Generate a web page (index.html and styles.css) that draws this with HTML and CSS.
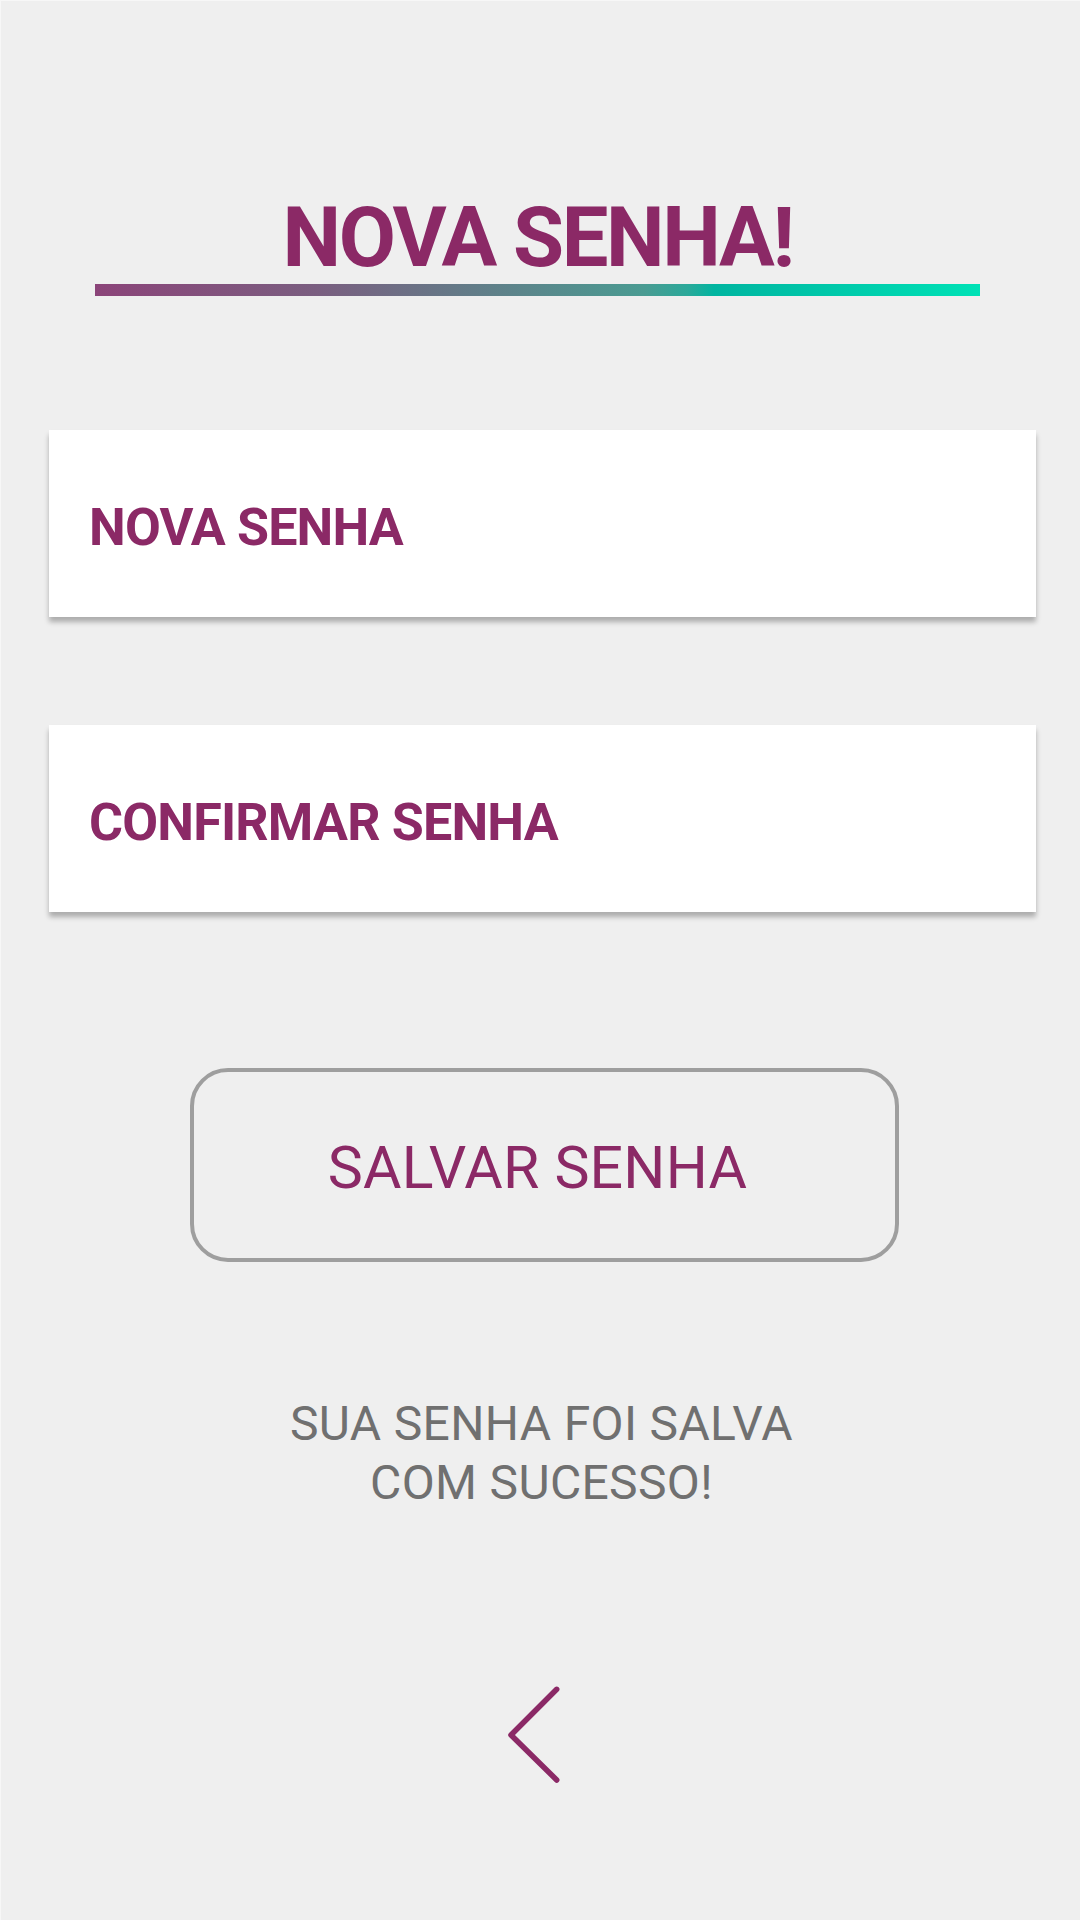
FILE: index.html
```html
<!DOCTYPE html>
<html lang="pt">
<head>
<meta charset="utf-8">
<title>Nova Senha</title>
<link rel="stylesheet" href="styles.css">
</head>
<body>
<main class="screen">
  <header class="header">
    <h1 class="title">NOVA SENHA!</h1>
    <div class="title-bar"></div>
  </header>

  <div class="field field-first"><span class="field-label">NOVA SENHA</span></div>
  <div class="field field-second"><span class="field-label">CONFIRMAR SENHA</span></div>

  <button class="save-btn" type="button">SALVAR SENHA</button>

  <p class="message">SUA SENHA FOI SALVA<br>COM SUCESSO!</p>

  <div class="back">
    <svg class="back-icon" width="70" height="101" viewBox="0 0 70 101" aria-label="Voltar">
      <path d="M50.7 5.3 L5 51 L50.7 96" fill="none" stroke="#8b2966" stroke-width="5.5" stroke-linecap="round" stroke-linejoin="round"/>
    </svg>
  </div>
</main>
</body>
</html>
```

FILE: styles.css
```css
* {
  box-sizing: border-box;
}

html, body {
  margin: 0;
  padding: 0;
  background: #efefef;
}

body {
  font-family: Roboto, "Liberation Sans", Arial, sans-serif;
  width: 1080px;
  height: 1920px;
  overflow: hidden;
}

.screen {
  width: 1080px;
  height: 1920px;
  border-top: 1px solid #f7f7f7;
  border-left: 1px solid #f7f7f7;
  display: flex;
  flex-direction: column;
  align-items: stretch;
}

.header {
  padding-top: 195px;
  display: flex;
  flex-direction: column;
  align-items: center;
}

.title {
  margin: 0;
  font-size: 83px;
  line-height: 83px;
  font-weight: 700;
  color: #8b2966;
  letter-spacing: -2.4px;
  padding-right: 6px;
}

.title-bar {
  margin-top: 5px;
  width: 885px;
  height: 12px;
  margin-left: 94px;
  align-self: flex-start;
  background: linear-gradient(to right, #8b4479 0%, #7a5e80 25%, #5f8089 45%, #4a9b92 62%, #2aa99a 67%, #00b5a0 70%, #00cbab 85%, #00e2b6 100%);
}

.field {
  margin-left: 48px;
  width: 987px;
  height: 187px;
  background: #ffffff;
  box-shadow: 0 5px 5px rgba(0, 0, 0, 0.28);
  display: flex;
  align-items: center;
  padding-left: 40px;
}

.field-first {
  margin-top: 134px;
}

.field-second {
  margin-top: 108px;
}

.field-label {
  font-size: 52px;
  font-weight: 700;
  color: #8b2966;
  padding-top: 8px;
  letter-spacing: -0.8px;
}

.save-btn {
  margin-top: 156px;
  margin-left: 189px;
  width: 709px;
  height: 194px;
  border: 4px solid #9e9e9e;
  border-radius: 38px;
  background: transparent;
  font-family: Roboto, "Liberation Sans", Arial, sans-serif;
  font-size: 59px;
  font-weight: 400;
  color: #8b2966;
  padding: 4px 14px 0 0;
  letter-spacing: 0.2px;
  cursor: pointer;
}

.message {
  margin: 132px 0 0 0;
  text-align: center;
  font-size: 48px;
  line-height: 59px;
  color: #707070;
  letter-spacing: 0.35px;
  padding-left: 2px;
}

.back {
  margin-top: 172px;
  display: flex;
  justify-content: center;
}

.back-icon {
  display: block;
}
```
